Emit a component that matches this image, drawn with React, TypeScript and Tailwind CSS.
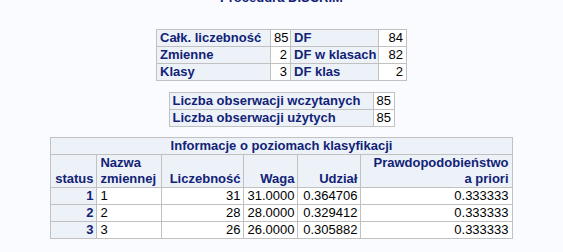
import React from "react";

const H = "border border-[#c1c1c1] bg-[#edf2f9] text-[#112277] font-bold px-[3px] py-0 align-bottom whitespace-nowrap";
const D = "border border-[#c1c1c1] bg-white text-black px-[3px] py-0 align-top whitespace-nowrap";

export default function App() {
  return (
    <div
      className="min-h-screen w-full bg-[#fafbfe] flex flex-col items-center text-[13px] leading-[16px]"
      style={{ fontFamily: '"Liberation Sans", Arial, sans-serif' }}
    >
      <div className="mt-[-10px] font-bold text-[#112277] text-[13px] leading-[16px]">Procedura DISCRIM</div>

      <table className="mt-[23px] border-collapse table-fixed w-[250px]">
        <colgroup>
          <col className="w-[114px]" />
          <col className="w-[20px]" />
          <col className="w-[88px]" />
          <col className="w-[28px]" />
        </colgroup>
        <tbody>
          <tr className="h-[17px]">
            <th className={`${H} text-left`}>Całk. liczebność</th>
            <td className={`${D} text-right`}>85</td>
            <th className={`${H} text-left`}>DF</th>
            <td className={`${D} text-right`}>84</td>
          </tr>
          <tr className="h-[17px]">
            <th className={`${H} text-left`}>Zmienne</th>
            <td className={`${D} text-right`}>2</td>
            <th className={`${H} text-left`}>DF w klasach</th>
            <td className={`${D} text-right`}>82</td>
          </tr>
          <tr className="h-[17px]">
            <th className={`${H} text-left`}>Klasy</th>
            <td className={`${D} text-right`}>3</td>
            <th className={`${H} text-left`}>DF klas</th>
            <td className={`${D} text-right`}>2</td>
          </tr>
        </tbody>
      </table>

      <table className="mt-[11px] border-collapse table-fixed w-[225px]">
        <colgroup>
          <col className="w-[204px]" />
          <col className="w-[21px]" />
        </colgroup>
        <tbody>
          <tr className="h-[17px]">
            <th className={`${H} text-left`}>Liczba obserwacji wczytanych</th>
            <td className={`${D} text-right`}>85</td>
          </tr>
          <tr className="h-[17px]">
            <th className={`${H} text-left`}>Liczba obserwacji użytych</th>
            <td className={`${D} text-right`}>85</td>
          </tr>
        </tbody>
      </table>

      <table className="mt-[10px] border-collapse table-fixed w-[461px]">
        <colgroup>
          <col className="w-[46px]" />
          <col className="w-[65px]" />
          <col className="w-[82px]" />
          <col className="w-[54px]" />
          <col className="w-[63px]" />
          <col className="w-[151px]" />
        </colgroup>
        <thead>
          <tr className="h-[17px]">
            <th colSpan={6} className={`${H} text-center`}>Informacje o poziomach klasyfikacji</th>
          </tr>
          <tr>
            <th className={`${H} text-right`}>status</th>
            <th className={`${H} text-left`}>Nazwa<br />zmiennej</th>
            <th className={`${H} text-right`}>Liczebność</th>
            <th className={`${H} text-right`}>Waga</th>
            <th className={`${H} text-right`}>Udział</th>
            <th className={`${H} text-right`}>Prawdopodobieństwo<br />a priori</th>
          </tr>
        </thead>
        <tbody>
          {[
            ["1", "1", "31", "31.0000", "0.364706", "0.333333"],
            ["2", "2", "28", "28.0000", "0.329412", "0.333333"],
            ["3", "3", "26", "26.0000", "0.305882", "0.333333"],
          ].map((r) => (
            <tr key={r[0]} className="h-[17px]">
              <th className={`${H} text-right`}>{r[0]}</th>
              <td className={`${D} text-left`}>{r[1]}</td>
              <td className={`${D} text-right`}>{r[2]}</td>
              <td className={`${D} text-right`}>{r[3]}</td>
              <td className={`${D} text-right`}>{r[4]}</td>
              <td className={`${D} text-right`}>{r[5]}</td>
            </tr>
          ))}
        </tbody>
      </table>
    </div>
  );
}
